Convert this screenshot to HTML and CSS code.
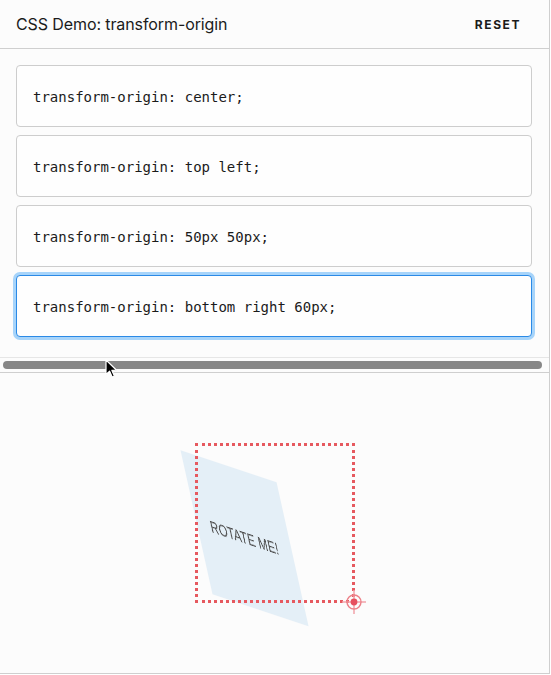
FILE: index.html
```html
<!DOCTYPE html>
<html>
<head>
<meta charset="utf-8">
<link rel="stylesheet" href="styles.css">
</head>
<body>
<div class="frame">
  <header class="header">
    <h4 class="title">CSS Demo: transform-origin</h4>
    <button class="reset">RESET</button>
  </header>
  <section class="editor">
    <div class="choice"><code>transform-origin: center;</code></div>
    <div class="choice"><code>transform-origin: top left;</code></div>
    <div class="choice"><code>transform-origin: 50px 50px;</code></div>
    <div class="choice selected"><code>transform-origin: bottom right 60px;</code></div>
  </section>
  <div class="track"><div class="thumb"></div></div>
  <section class="output">
    <div class="container">
      <div class="element">ROTATE ME!</div>
      <div class="static"></div>
      <svg class="crosshair" width="24" height="24" viewBox="0 0 24 24">
        <line x1="0" y1="12" x2="24" y2="12" stroke="#f2a3aa" stroke-width="1.5"/>
        <line x1="12" y1="0" x2="12" y2="24" stroke="#f2a3aa" stroke-width="1.5"/>
        <circle cx="12" cy="12" r="7" fill="none" stroke="#ec8088" stroke-width="1.4"/>
        <circle cx="12" cy="12" r="3.4" fill="#e6505e"/>
      </svg>
    </div>
  </section>
  <svg class="cursor" width="14" height="20" viewBox="0 0 14 20">
    <path d="M1 1 L1 15.5 L4.6 12.2 L7.2 18 L9.4 17 L6.9 11.4 L11.6 11.2 Z" fill="#000" stroke="#fff" stroke-width="1.2" stroke-linejoin="round"/>
  </svg>
</div>
</body>
</html>
```
FILE: styles.css
```css
html, body {
  margin: 0;
  padding: 0;
  background: #ffffff;
}
.frame {
  position: relative;
  box-sizing: border-box;
  width: 550px;
  height: 674px;
  background: #fcfcfc;
  border-right: 1px solid #cfcfcf;
  border-bottom: 1px solid #cfcfcf;
  font-family: Inter, "Liberation Sans", sans-serif;
  color: #1b1b1b;
}
.header {
  box-sizing: border-box;
  height: 49px;
  border-bottom: 1px solid #cfcfcf;
  display: flex;
  align-items: center;
  justify-content: space-between;
  padding: 0 28px 0 16px;
}
.title {
  margin: 0;
  font-size: 16px;
  font-weight: 400;
  letter-spacing: -0.1px;
}
.reset {
  border: 0;
  background: none;
  padding: 0;
  font-family: Inter, "Liberation Sans", sans-serif;
  font-size: 12px;
  font-weight: 700;
  letter-spacing: 0.13em;
  color: #1b1b1b;
}
.editor {
  display: flex;
  flex-direction: column;
  gap: 8px;
  padding: 16px 17px 20px 16px;
}
.choice {
  box-sizing: border-box;
  height: 62px;
  border: 1px solid #cdcdcd;
  border-radius: 4px;
  background: #fefefe;
  padding: 0 16px;
  display: flex;
  align-items: center;
}
.choice code {
  font-family: "DejaVu Sans Mono", monospace;
  font-size: 14px;
  color: #1b1b1b;
  padding-top: 1px;
}
.selected {
  border-color: #2b8ae6;
  box-shadow: 0 0 0 3px #a7d4fa;
}
.track {
  box-sizing: border-box;
  height: 16px;
  border-top: 1px solid #e6e6e6;
  border-bottom: 1px solid #cfcfcf;
  padding: 3px 7px 0 3px;
}
.thumb {
  height: 8px;
  border-radius: 4px;
  background: #878787;
}
.output {
  height: 300px;
  display: flex;
  align-items: center;
  justify-content: center;
}
.container {
  position: relative;
  width: 160px;
  height: 160px;
}
.element {
  width: 160px;
  height: 160px;
  display: flex;
  align-items: center;
  justify-content: center;
  background: #e4eff7;
  color: #4c4c4c;
  font-family: "Liberation Sans", Arial, sans-serif;
  font-size: 19px;
  transform-origin: bottom right 60px;
  transform: rotate3d(1, 2, 0, 60deg);
}
.static {
  position: absolute;
  top: 0;
  left: 0;
  box-sizing: border-box;
  width: 160px;
  height: 160px;
  border: 3px dotted #e6595f;
}
.crosshair {
  position: absolute;
  left: 147px;
  top: 147px;
}
.cursor {
  position: absolute;
  left: 105px;
  top: 359px;
}
```
